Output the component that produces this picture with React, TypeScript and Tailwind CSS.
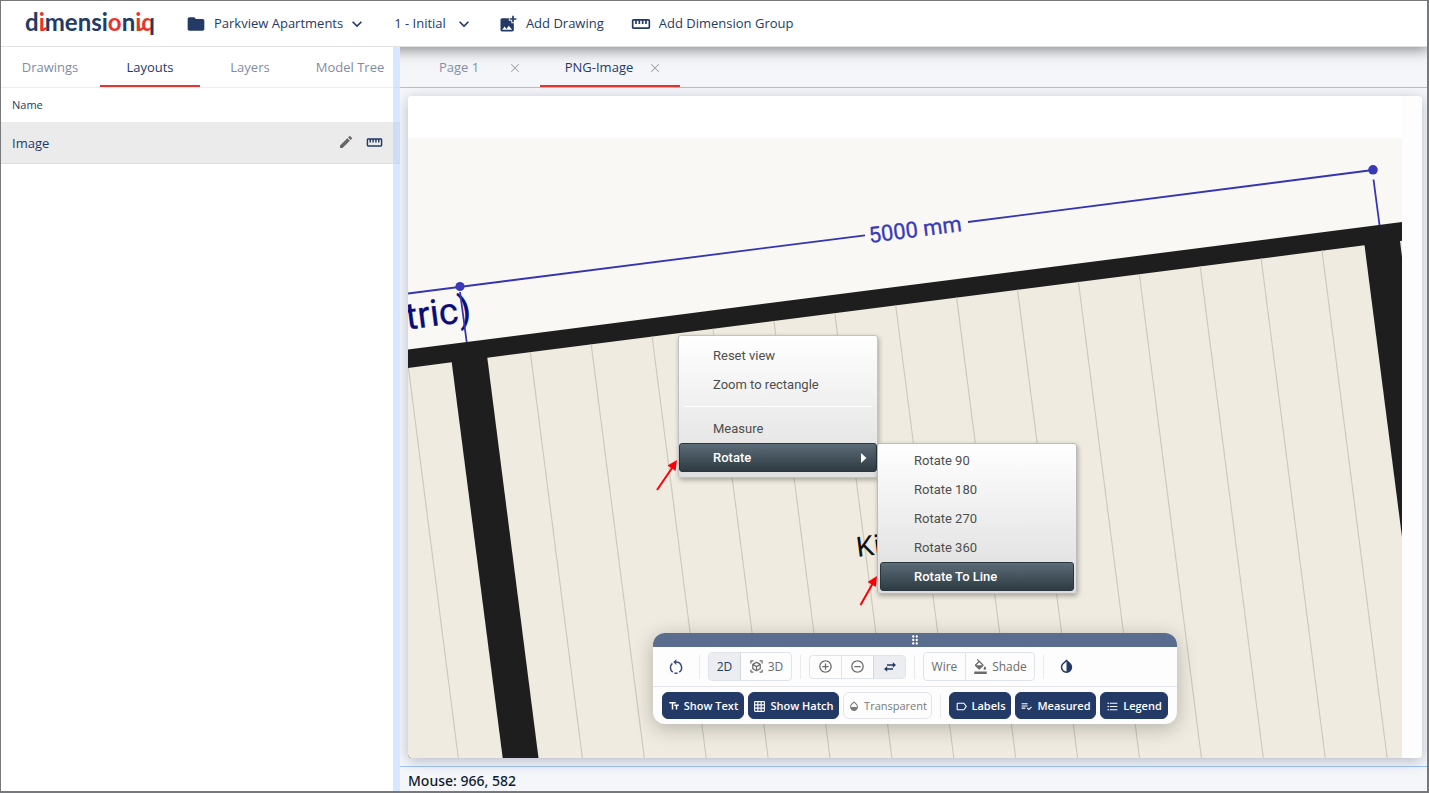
import { useState } from 'react'
import type { ReactNode } from 'react'
import clsx from 'clsx'
import { X } from 'lucide-react'
import {
  MdAddCircleOutline,
  MdAddPhotoAlternate,
  MdDragIndicator,
  MdEdit,
  MdExpandMore,
  MdFolder,
  MdFormatColorFill,
  MdFormatListBulleted,
  MdGridOn,
  MdInvertColors,
  MdLabelOutline,
  MdOpacity,
  MdPlaylistAddCheck,
  MdRemoveCircleOutline,
  MdStraighten,
  MdTextFields,
  MdViewInAr,
} from 'react-icons/md'

const SIDEBAR_TABS = ['Drawings', 'Layouts', 'Layers', 'Model Tree']
const PAGES = ['Page 1', 'PNG-Image']
const ROTATIONS = ['Rotate 90', 'Rotate 180', 'Rotate 270', 'Rotate 360', 'Rotate To Line']

function Logo() {
  return (
    <a href="#" className="ml-[25px] w-[133px]">
      <svg viewBox="0 0 133 34" className="h-[34px] w-[133px] overflow-visible">
        <defs>
          <linearGradient id="q-split" gradientUnits="userSpaceOnUse" x1="116" x2="130" y1="0" y2="0">
            <stop offset="68%" stopColor="#e8352b" />
            <stop offset="68%" stopColor="#243a66" />
          </linearGradient>
        </defs>
        <text y="24" fontSize="24" fontWeight="700" fill="#243a66" className="font-['Lato']">
          d<tspan fill="#e8352b">i</tspan>mensi<tspan fill="#e8352b">o</tspan>n
          <tspan fill="#e8352b">i</tspan>
          <tspan fill="url(#q-split)">q</tspan>
        </text>
        {/* tails of the accented letters */}
        <path
          d="M16.800 20Q16.800 24.500 20.500 21.500M113.800 20Q113.800 24.500 117.500 21.500"
          fill="none"
          stroke="#e8352b"
          strokeWidth="2.4"
          strokeLinecap="round"
        />
      </svg>
    </a>
  )
}

function Header() {
  return (
    <header className="relative z-10 flex h-[47px] shrink-0 items-center border-b border-[#e3e3e3] bg-white pt-[2px] text-[13px] font-medium text-[#243a66] shadow-[0_2px_14px_rgba(0,0,0,0.5)]">
      <Logo />
      <button className="ml-7 flex items-center">
        <MdFolder size={20} />
        <span className="ml-2">Parkview Apartments</span>
        <MdExpandMore size={20} className="ml-1" />
      </button>
      <button className="ml-[27px] flex items-center">
        <span>1 - Initial</span>
        <MdExpandMore size={20} className="ml-2" />
      </button>
      <button className="ml-6 flex items-center gap-2">
        <MdAddPhotoAlternate size={20} />
        Add Drawing
      </button>
      <button className="ml-[27px] flex items-center gap-2">
        <MdStraighten size={20} />
        Add Dimension Group
      </button>
    </header>
  )
}

function Sidebar() {
  const [tab, setTab] = useState('Layouts')

  return (
    <aside className="relative z-20 w-[400px] shrink-0 bg-white">
      <div role="tablist" className="flex h-[41px] border-b border-[#ececec]">
        {SIDEBAR_TABS.map((name) => (
          <button
            key={name}
            role="tab"
            aria-selected={name === tab}
            onClick={() => setTab(name)}
            className={clsx(
              'h-10 flex-1 border-b-2 pt-[3px] text-[13px] font-medium',
              name === tab ? 'border-[#e8352b] text-[#243a66]' : 'border-transparent text-[#7f8ba3]'
            )}
          >
            {name}
          </button>
        ))}
      </div>
      <table className="w-full text-[#243a66]">
        <thead>
          <tr className="h-[34px]">
            <th className="pl-3 text-left text-[11px] font-normal">Name</th>
            <th />
          </tr>
        </thead>
        <tbody>
          <tr className="h-[41px] border-b border-[#dedede] bg-[#ebebeb]">
            <td className="pt-[2px] pl-3 text-[13px]">Image</td>
            <td className="pr-[17px]">
              <div className="flex items-center justify-end gap-3">
                <button aria-label="Edit" className="text-[#666]">
                  <MdEdit size={16} />
                </button>
                <button aria-label="Dimensions">
                  <MdStraighten size={17} />
                </button>
              </div>
            </td>
          </tr>
        </tbody>
      </table>
      <div className="absolute inset-y-0 right-0 w-[7px] bg-[#acd2ff]/50" />
    </aside>
  )
}

// First room's floor boards, 61 units apart and perpendicular to the top wall
const BOARDS = Array.from({ length: 14 }, (_, i) => {
  const x = 530.3 + i * 60.9
  const y = 357.7 - 0.1284 * (x - 487.3)
  return { x, y, x2: x + 0.1284 * (758 - y) }
})

function FloorPlan() {
  return (
    <svg
      viewBox="408 96 994 662"
      preserveAspectRatio="xMinYMin slice"
      className="h-full min-w-0 flex-1 bg-white font-['Roboto']"
    >
      <rect x="408" y="138" width="994" height="620" fill="#f9f8f4" />
      <path d="M408 349.5L1402 222V758H408Z" fill="#1e1e1e" />
      <g fill="#efebe0">
        <path d="M408 368L451.7 362.3L502.7 758H408Z" />
        <path d="M487.3 357.7L1364.5 245.3L1402 537V758H538.5Z" />
        <path d="M1400 241L1402 240.7V257Z" />
      </g>
      <g stroke="#cbc7bb" strokeWidth="1.1">
        <path d="M408.5 368L458.3 758" />
        {BOARDS.map((b) => (
          <path key={b.x} d={`M${b.x} ${b.y}L${b.x2} 758`} />
        ))}
      </g>
      <text
        transform="translate(407 329.5) rotate(-7.3)"
        fontSize="37"
        fill="#0c0c78"
        stroke="#0c0c78"
        strokeWidth="0.3"
      >
        tric)
      </text>
      <g stroke="#3434b4" strokeWidth="1.8">
        <path d="M408 293.5L865 235.3M968 222L1373 170M460 292L466.7 342M1373.5 179.5L1379.5 225" />
      </g>
      <circle cx="460" cy="286.5" r="4.6" fill="#3a3ab8" />
      <circle cx="1373" cy="169.8" r="4.8" fill="#3a3ab8" />
      <text
        transform="translate(916 237) rotate(-7.3)"
        textAnchor="middle"
        fontSize="22"
        fill="#3a3ab8"
        stroke="#3a3ab8"
        strokeWidth="0.3"
      >
        5000 mm
      </text>
      <text transform="translate(857.5 557) rotate(-7.3)" fontSize="28" fill="#111">
        Kitchen
      </text>
    </svg>
  )
}

function MenuItem({ label, active, arrow }: { label: string; active?: boolean; arrow?: boolean }) {
  return (
    <button
      role="menuitem"
      className={clsx(
        'flex h-[29px] w-full items-center rounded-[3px] pl-[33px] text-left',
        active
          ? 'border border-[#2a363d] bg-linear-to-b from-[#5c6c78] to-[#2e3b42] font-medium text-white'
          : 'border border-transparent text-[#4e4e4e]'
      )}
    >
      {label}
      {arrow && (
        <svg width="6" height="10" className="mr-[9px] ml-auto" fill="currentColor">
          <path d="M0 0L5.5 5L0 10Z" />
        </svg>
      )}
    </button>
  )
}

function ContextMenu() {
  return (
    <div className="font-['Roboto'] text-[13px]">
      <div
        role="menu"
        className="absolute top-[239px] left-[270px] w-[200px] rounded-[3px] border border-[#c3c3c5] bg-linear-to-b from-white to-[#dfdfdf] pt-[5px] pb-[5px] shadow-[1px_2px_5px_rgba(0,0,0,0.3)]"
      >
        <MenuItem label="Reset view" />
        <MenuItem label="Zoom to rectangle" />
        <hr className="mx-[5px] my-[7px] border-white" />
        <MenuItem label="Measure" />
        <MenuItem label="Rotate" active arrow />
      </div>
      <div
        role="menu"
        className="absolute top-[347px] left-[469px] w-[200px] rounded-[3px] border border-[#b9bbbd] bg-linear-to-b from-white to-[#dcdcdc] px-[2px] py-[2px] shadow-[1px_2px_5px_rgba(0,0,0,0.3)]"
      >
        {ROTATIONS.map((label) => (
          <MenuItem key={label} label={label} active={label === 'Rotate To Line'} />
        ))}
      </div>
      {/* pointers to the highlighted entries */}
      <svg
        viewBox="0 0 240 160"
        className="pointer-events-none absolute top-[354px] left-[240px] h-[160px] w-[240px]"
        fill="#fb0007"
        stroke="#fb0007"
      >
        <path d="M9 40L24 18M212.500 155L225 133" strokeWidth="2" />
        <path d="M29 10L19.500 15.500L27.500 21ZM229 126L219.500 132L228 137Z" stroke="none" />
      </svg>
    </div>
  )
}

function RotateIcon() {
  return (
    <svg width="16" height="16" viewBox="0 0 16 16" fill="none" stroke="currentColor" strokeWidth="1.5">
      <path d="M8 3A5.600 5.600 0 0 1 11.200 13.200" />
      <path d="M9.600 14A5.600 5.600 0 0 1 6.400 14" />
      <path d="M4.800 13.200A5.600 5.600 0 0 1 4.400 4.300" />
      <path d="M8.300 0.300V6L5.200 3.100Z" fill="currentColor" stroke="none" />
    </svg>
  )
}

function SwapIcon() {
  return (
    <svg width="12" height="10" viewBox="0 0 12 10" fill="currentColor">
      <path d="M3 2.300H8.800V0.300L12 3L8.800 5.700V3.700H3ZM9 6.300H3.200V4.300L0 7L3.200 9.700V7.700H9Z" />
    </svg>
  )
}

function Divider() {
  return <span className="h-6 w-px shrink-0 bg-[#e9ebee]" />
}

type ToggleProps = {
  icon: ReactNode
  label: string
  className: string
  on?: boolean
}

function Toggle({ icon, label, className, on = true }: ToggleProps) {
  const [pressed, setPressed] = useState(on)

  return (
    <button
      aria-pressed={pressed}
      onClick={() => setPressed(!pressed)}
      className={clsx(
        'flex h-[27px] items-center justify-center gap-1 rounded-md border pt-px text-[11px] whitespace-nowrap',
        pressed
          ? 'border-[#243a66] bg-[#243a66] font-semibold text-white'
          : 'border-[#e2e4e8] text-[#7a7a7a]',
        className
      )}
    >
      {icon}
      {label}
    </button>
  )
}

function Toolbar() {
  return (
    <div className="absolute bottom-[34px] left-1/2 w-[524px] -translate-x-1/2 overflow-hidden rounded-xl bg-[#fdfdfd] shadow-[0_4px_20px_rgba(0,0,0,0.25)]">
      <div className="flex h-[14px] items-center justify-center bg-[#5b6d8f] text-white">
        <MdDragIndicator size={14} />
      </div>
      <div className="flex h-10 items-center gap-2 border-b border-[#e4e6ea] pl-2 text-[12px] text-[#6b6b6b]">
        <button aria-label="Reset rotation" className="flex w-[30px] justify-center text-[#3c5078]">
          <RotateIcon />
        </button>
        <Divider />
        <div className="flex h-[29px] overflow-hidden rounded border border-[#dfe3ea]">
          <button className="w-8 border-r border-[#d3d9e3] bg-[#ebedf0] text-[#243a66]">2D</button>
          <button className="flex w-[50px] items-center justify-center gap-1">
            <MdViewInAr size={15} />
            3D
          </button>
        </div>
        <Divider />
        <div className="flex h-6 overflow-hidden rounded border border-[#dfe3ea]">
          <button aria-label="Zoom in" className="flex w-[31px] items-center justify-center">
            <MdAddCircleOutline size={15} />
          </button>
          <button
            aria-label="Zoom out"
            className="flex w-8 items-center justify-center border-l border-[#dfe3ea]"
          >
            <MdRemoveCircleOutline size={15} />
          </button>
          <button
            aria-label="Pan"
            className="flex w-8 items-center justify-center border-l border-[#d3d9e3] bg-[#ebedf0] text-[#243a66]"
          >
            <SwapIcon />
          </button>
        </div>
        <Divider />
        <div className="flex h-[29px] overflow-hidden rounded border border-[#dfe3ea]">
          <button className="w-[42px] border-r border-[#dfe3ea]">Wire</button>
          <button className="flex w-[68px] items-center justify-center gap-1">
            <MdFormatColorFill size={15} />
            Shade
          </button>
        </div>
        <Divider />
        <button aria-label="Invert colors" className="flex w-[28px] justify-center text-[#243a66]">
          <MdInvertColors size={17} />
        </button>
      </div>
      <div className="flex h-[37px] items-center gap-1 pl-[9px]">
        <Toggle icon={<MdTextFields size={12} />} label="Show Text" className="w-[82px]" />
        <Toggle icon={<MdGridOn size={13} />} label="Show Hatch" className="w-[91px]" />
        <Toggle icon={<MdOpacity size={12} />} label="Transparent" className="w-[89px]" on={false} />
        <span className="mx-1 h-6 w-px bg-[#e9ebee]" />
        <Toggle icon={<MdLabelOutline size={13} />} label="Labels" className="w-[62px]" />
        <Toggle icon={<MdPlaylistAddCheck size={13} />} label="Measured" className="w-[81px]" />
        <Toggle icon={<MdFormatListBulleted size={13} />} label="Legend" className="w-[68px]" />
      </div>
    </div>
  )
}

function Workspace() {
  const [page, setPage] = useState('PNG-Image')

  return (
    <main className="flex min-w-0 flex-1 flex-col bg-[#f4f6fa]">
      <div className="flex h-[41px] shrink-0 border-b border-[#9cc4fa] text-[13px]">
        {PAGES.map((name) => (
          <div
            key={name}
            className={clsx(
              'flex h-10 w-[140px] items-center border-b-2 pt-[3px]',
              name === page ? 'border-[#e8352b] text-[#243a66]' : 'border-transparent text-[#8590a6]'
            )}
          >
            <button onClick={() => setPage(name)} className="flex-1 pl-[10px] text-center">
              {name}
            </button>
            <button aria-label={`Close ${name}`} className="mr-[18px] text-[#a0a3a9]">
              <X size={14} strokeWidth={1.8} />
            </button>
          </div>
        ))}
      </div>
      <div className="relative mx-2 mt-2 mr-[7px] mb-2 flex min-h-0 flex-1 rounded bg-[#fdfdfd] shadow-[0_3px_14px_rgba(40,50,80,0.3)]">
        <div className="flex min-w-0 flex-1 overflow-hidden rounded pr-5">
          <FloorPlan />
        </div>
        <ContextMenu />
        <Toolbar />
      </div>
      <footer className="flex h-[27px] shrink-0 items-center border-t border-[#9cc4fa] pl-2 font-['Noto_Sans'] text-[14px] font-medium text-[#0f1c2e]">
        Mouse: 966, 582
      </footer>
    </main>
  )
}

export default function App() {
  return (
    <div className="relative flex h-screen flex-col overflow-hidden font-['Open_Sans',sans-serif]">
      <Header />
      <div className="flex min-h-0 flex-1">
        <Sidebar />
        <Workspace />
      </div>
      {/* window frame */}
      <div className="pointer-events-none absolute inset-0 z-30 border-t border-r-2 border-b-2 border-l border-[#77787b]" />
    </div>
  )
}
